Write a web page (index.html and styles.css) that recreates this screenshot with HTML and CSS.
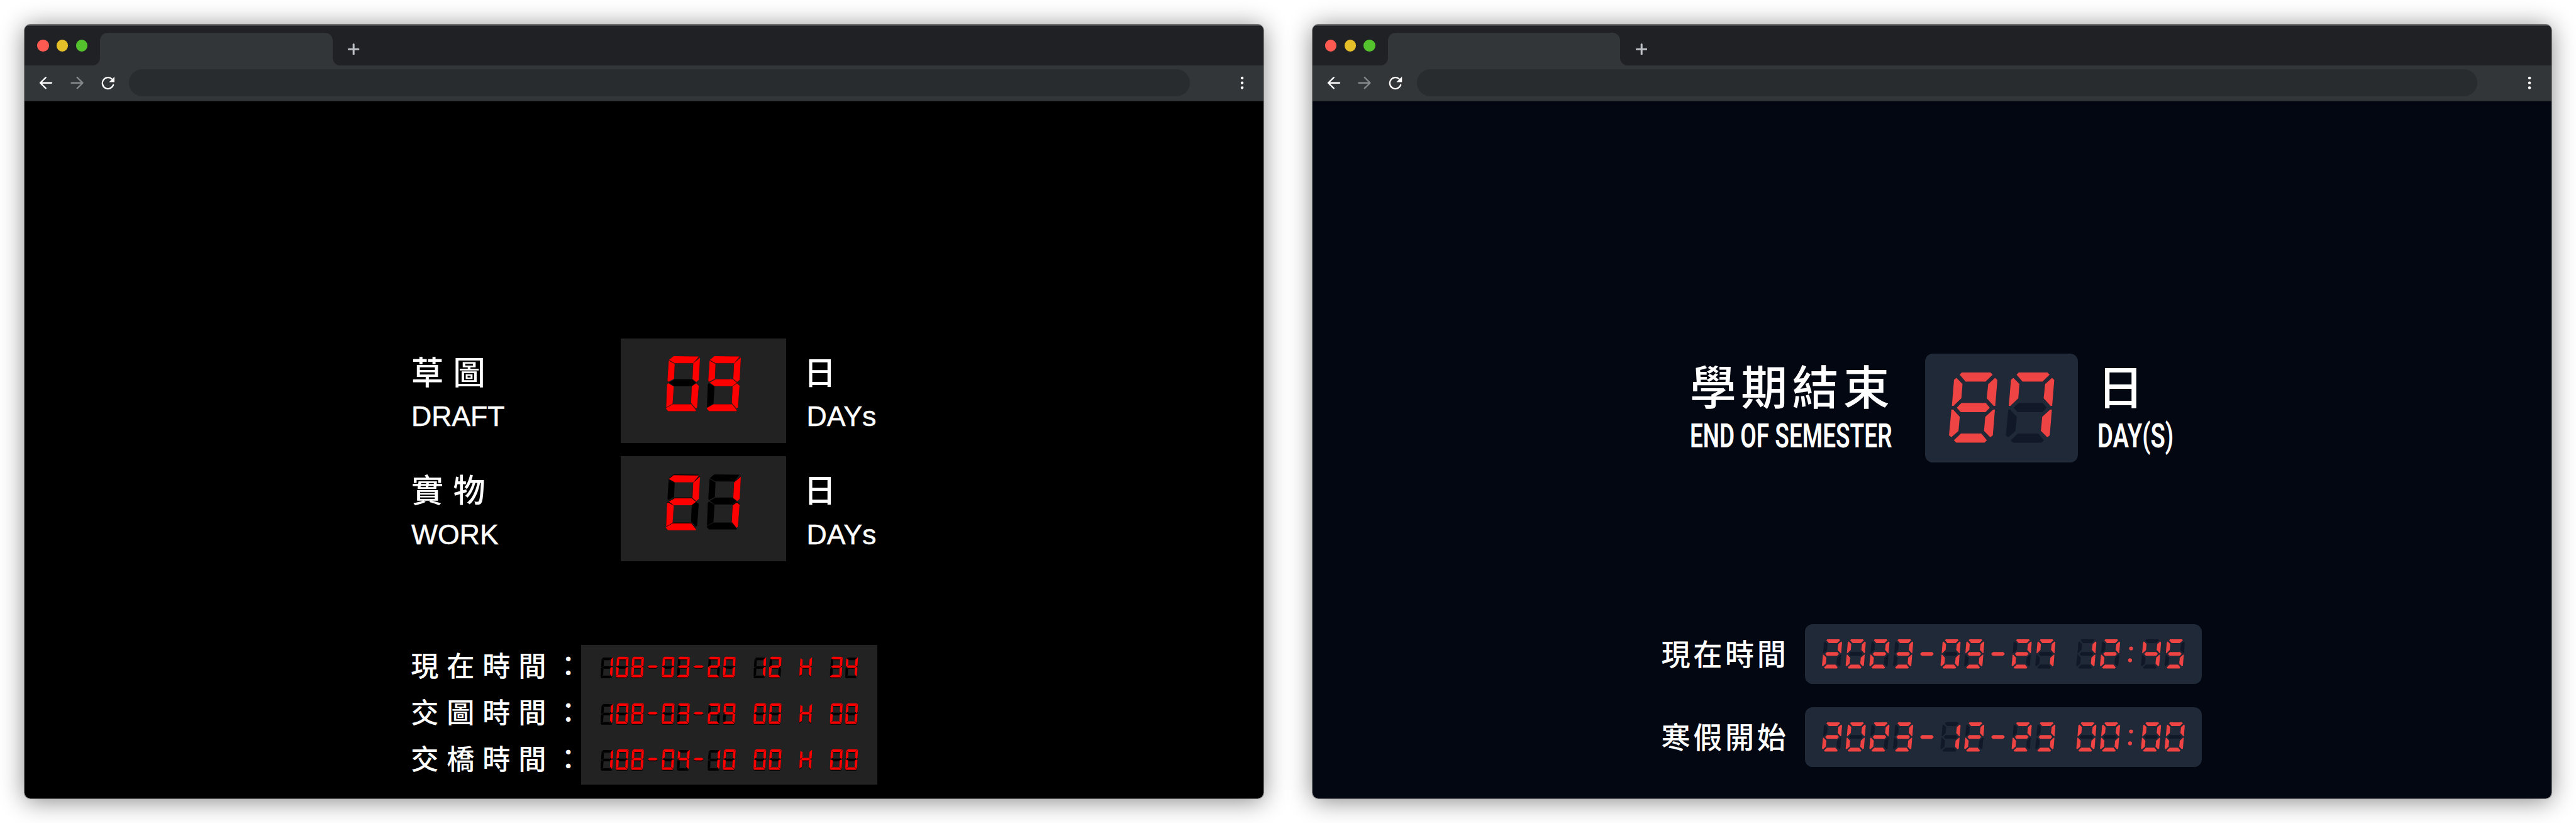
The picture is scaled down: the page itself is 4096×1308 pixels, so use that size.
FILE: index.html
```html
<!DOCTYPE html>
<html lang="zh-Hant">
<head>
<meta charset="utf-8">
<title>倒數計時</title>
<link rel="stylesheet" href="styles.css">
</head>
<body>
<main class="desk">

  <section class="window">
    <header class="chrome">
      <div class="tabstrip">
        <div class="lights"><i class="light close"></i><i class="light minimise"></i><i class="light zoom"></i></div>
        <div class="tab-slot"><div class="tab"></div></div>
        <div class="strip-rest">
          <svg class="plus" viewBox="0 0 24 24"><path d="M12 2v20M2 12h20"/></svg>
        </div>
      </div>
      <div class="toolbar">
        <svg class="icon back" viewBox="0 0 28 28"><path d="M26 14H3M14 2.8L2.6 14L14 25.2"/></svg>
        <svg class="icon forward" viewBox="0 0 28 28"><path d="M2 14h23M14 2.8L25.4 14L14 25.2"/></svg>
        <svg class="icon reload" viewBox="0 0 28 28"><path d="M22.2 6.2A11.6 11.6 0 1 0 25 18.2"/><path class="head" d="M27.6 1v11.2H16.2z"/></svg>
        <div class="address"></div>
        <svg class="menu" viewBox="0 0 8 28"><circle cx="4" cy="4" r="2.9"/><circle cx="4" cy="14" r="2.9"/><circle cx="4" cy="24" r="2.9"/></svg>
      </div>
    </header>
    <div class="page classic">
      <div class="counter">
        <div class="name"><p class="zh">草圖</p><p class="en">DRAFT</p></div>
        <div class="panel"><div class="readout" data-face="classic">09</div></div>
        <div class="unit"><p class="zh">日</p><p class="en">DAYs</p></div>
      </div>
      <div class="counter sunk">
        <div class="name"><p class="zh">實物</p><p class="en">WORK</p></div>
        <div class="panel"><div class="readout" data-face="classic">21</div></div>
        <div class="unit"><p class="zh">日</p><p class="en">DAYs</p></div>
      </div>
      <div class="schedule">
        <div class="labels"><p>現在時間：</p><p>交圖時間：</p><p>交橋時間：</p></div>
        <div class="times">
          <div class="readout" data-face="classic">108-03-20 12 H 34</div>
          <div class="readout" data-face="classic">108-03-29 00 H 00</div>
          <div class="readout" data-face="classic">108-04-10 00 H 00</div>
        </div>
      </div>
    </div>
  </section>

  <section class="window">
    <header class="chrome">
      <div class="tabstrip">
        <div class="lights"><i class="light close"></i><i class="light minimise"></i><i class="light zoom"></i></div>
        <div class="tab-slot"><div class="tab"></div></div>
        <div class="strip-rest">
          <svg class="plus" viewBox="0 0 24 24"><path d="M12 2v20M2 12h20"/></svg>
        </div>
      </div>
      <div class="toolbar">
        <svg class="icon back" viewBox="0 0 28 28"><path d="M26 14H3M14 2.8L2.6 14L14 25.2"/></svg>
        <svg class="icon forward" viewBox="0 0 28 28"><path d="M2 14h23M14 2.8L25.4 14L14 25.2"/></svg>
        <svg class="icon reload" viewBox="0 0 28 28"><path d="M22.2 6.2A11.6 11.6 0 1 0 25 18.2"/><path class="head" d="M27.6 1v11.2H16.2z"/></svg>
        <div class="address"></div>
        <svg class="menu" viewBox="0 0 8 28"><circle cx="4" cy="4" r="2.9"/><circle cx="4" cy="14" r="2.9"/><circle cx="4" cy="24" r="2.9"/></svg>
      </div>
    </header>
    <div class="page modern">
      <div class="counter">
        <div class="name"><p class="zh">學期結束</p><p class="en"><span>END OF SEMESTER</span></p></div>
        <div class="panel"><div class="readout" data-face="modern">87</div></div>
        <div class="unit"><p class="zh">日</p><p class="en"><span>DAY(S)</span></p></div>
      </div>
      <div class="moment">
        <p>現在時間</p>
        <div class="panel"><div class="readout" data-face="modern">2023-09-27 12:45</div></div>
      </div>
      <div class="moment">
        <p>寒假開始</p>
        <div class="panel"><div class="readout" data-face="modern">2023-12-23 00:00</div></div>
      </div>
    </div>
  </section>

</main>
<script src="readout.js"></script>
</body>
</html>
```
FILE: styles.css
```css
/* 1rem = 100 design pixels */
html { font-size: 76.935px; }

* { box-sizing: border-box; }

body {
  margin: 0;
  background: #fff;
  color: #fff;
  font-family: "Liberation Sans", "Noto Sans CJK TC", sans-serif;
  overflow: hidden;
}

p { margin: 0; white-space: nowrap; }

.desk {
  display: flex;
  gap: 1.01rem;
  height: 17rem;
  padding: .503rem .51rem .505rem;
}

.window {
  flex: 1 1 0;
  min-width: 0;
  display: flex;
  flex-direction: column;
  border-radius: .12rem;
  box-shadow: 0 0 0 1px rgba(0, 0, 0, .35), 0 .05rem .5rem rgba(0, 0, 0, .48);
}

/* browser chrome */
.chrome {
  border-radius: .12rem .12rem 0 0;
  background: #323639;
  border-bottom: 1px solid #28292b;
  height: 1.587rem;
  overflow: hidden;
}

.tabstrip {
  display: flex;
  height: .847rem;
  border-top: 2px solid #48494b;
}

.lights {
  display: flex;
  gap: .16rem;
  width: 1.56rem;
  padding: .293rem 0 0 .26rem;
  background: #202124;
  border-bottom-right-radius: .16rem;
}

.light { width: .24rem; height: .24rem; border-radius: 50%; }
.close { background: #ff5a52; }
.minimise { background: #e6c029; }
.zoom { background: #54c22d; }

.tab-slot {
  width: 4.8rem;
  padding-top: .145rem;
  background: linear-gradient(#202124 50%, #323639 50%);
}

.tab {
  height: 100%;
  background: #323639;
  border-radius: .16rem .16rem 0 0;
}

.strip-rest {
  flex: 1;
  padding: .365rem 0 0 .32rem;
  background: #202124;
  border-bottom-left-radius: .16rem;
}

.plus {
  display: block;
  width: .24rem;
  height: .24rem;
  fill: none;
  stroke: #bdc1c6;
  stroke-width: 4;
  stroke-linecap: round;
}

.toolbar {
  display: flex;
  align-items: center;
  height: .73rem;
  padding-left: .3rem;
}

.icon {
  width: .28rem;
  height: .28rem;
  margin-right: .36rem;
  fill: none;
  stroke: #fff;
  stroke-width: 3;
  stroke-linecap: round;
  stroke-linejoin: round;
}
.forward { stroke: #86888a; }
.reload { margin-right: .3rem; }
.reload .head { fill: #fff; stroke: none; }

.address {
  width: 21.92rem;
  height: .56rem;
  border-radius: .28rem;
  background: #282c2f;
}

.menu { width: .08rem; height: .28rem; margin-left: 1.04rem; fill: #fff; }

/* pages */
.page {
  flex: 1;
  border-radius: 0 0 .12rem .12rem;
}

.counter { display: flex; }
.readout svg { display: block; overflow: visible; }
.zh, .labels, .moment p { font-family: "Noto Sans CJK TC", sans-serif; }

/* first page */
.classic {
  --on: #f00;
  --off: #000;
  background: #000;
  padding: 4.9rem 0 0 7.99rem;
}

.classic .counter { height: 2.16rem; margin-bottom: .28rem; }
.classic .name { width: 4.33rem; padding-top: .205rem; }
.classic .unit { padding: .205rem 0 0 .42rem; }
.classic .zh { font-size: .665rem; line-height: .92rem; letter-spacing: .2rem; font-weight: 500; }
.classic .unit .zh { margin-left: -.06rem; }
.classic .en { font-size: .58rem; line-height: .92rem; margin-top: .035rem; -webkit-text-stroke: .5px #fff; }
.classic .counter .panel { width: 3.42rem; padding: .37rem 0 0 .93rem; background: #222; }
.classic .counter svg { height: 1.137rem; }
.classic .sunk { --shift: 5px; }

.schedule { display: flex; margin-top: 1.74rem; --shift: -13px; }
.labels { width: 3.51rem; font-size: .575rem; font-weight: 500; letter-spacing: .167rem; }
.labels p { line-height: .96rem; position: relative; top: -.07rem; left: -.01rem; }
.times { width: 6.12rem; background: #222; padding-left: .4rem; }
.times .readout { height: .96rem; padding-top: .25rem; }
.times svg { height: .426rem; }

/* second page */
.modern {
  --on: #ef4444;
  --off: #111827;
  background: #030712;
  padding: 5.22rem 0 0 7.2rem;
}

.modern .panel { background: #1f2937; border-radius: .16rem; }

.modern .counter { height: 2.24rem; padding-left: .6rem; margin-bottom: 3.34rem; }
.modern .name { width: 4.86rem; padding-top: .03rem; }
.modern .unit { padding: .03rem 0 0 .4rem; }
.modern .zh { font-size: .96rem; line-height: 1.2rem; letter-spacing: .096rem; font-weight: 500; }
.modern .en { font: 600 .7rem/1rem Roboto, sans-serif; margin-top: -.02rem; }
.modern .en span { display: inline-block; transform: scaleX(.687); transform-origin: 0 50%; }
.modern .unit .en span { transform: scaleX(.71); }
.modern .counter .panel { width: 3.16rem; padding: .39rem 0 0 .49rem; }
.modern .counter svg { height: 1.45rem; }

.moment { display: flex; height: 1.24rem; margin-bottom: .48rem; }
.moment p { width: 2.98rem; padding-left: .01rem; font-size: .6rem; line-height: 1.17rem; letter-spacing: .06rem; font-weight: 500; }
.moment .panel { width: 8.2rem; padding: .31rem 0 0 .35rem; }
.moment svg { height: .604rem; }

/* lamps */
.unlit { fill: var(--off); }
.lit { fill: var(--on); transform: translateY(var(--shift, 0)); }
```
FILE: readout.js
```js
// Turns the text of each .readout into a row of seven-segment cells.
const FACES = {
  classic: {
    height: 341, advance: 253, gap: 253,
    segments: {
      a: '47,0 204,2 169,44 54,44 18,23',
      b: '211,9 204,146 188,161 164,141 169,45',
      c: '187,169 203,183 193,317 185,326 155,290 160,187',
      d: '42,298 157,298 186,335 184,341 13,341 0,326 1,321',
      e: '13,168 48,188 41,295 1,318 6,175',
      f: '17,27 54,49 50,140 15,159 9,152',
      g: '18,164 54,143 160,143 186,165 158,186 48,186'
    }
  },
  modern: {
    height: 435, advance: 353, gap: 257,
    segments: {
      a: '79,0 258,0 271,14 227,57 103,57 66,14',
      b: '286,33 300,47 287,207 277,207 234,160 243,72',
      c: '274,230 285,230 272,390 256,402 217,362 225,275',
      d: '74,378 201,378 235,420 221,435 45,435 30,420',
      e: '15,230 26,230 67,275 59,363 14,402 0,389',
      f: '46,33 84,71 77,160 28,207 18,207 31,46',
      g: '77,189 229,189 253,218 227,246 73,246 48,218'
    }
  }
};

const LAMPS = {
  0: 'abcdef', 1: 'bc', 2: 'abged', 3: 'abgcd', 4: 'fgbc',
  5: 'afgcd', 6: 'afgedc', 7: 'fabc', 8: 'abcdefg', 9: 'abcdfg',
  '-': 'g', H: 'bcefg'
};

for (const el of document.querySelectorAll('.readout')) {
  const name = el.dataset.face;
  const face = FACES[name];
  const text = el.textContent.trim();
  let x = 0, unlit = '', lit = '';
  const draw = lamps => [...lamps]
    .map(s => `<polygon points="${face.segments[s]}" transform="translate(${x} 0)"/>`).join('');

  for (const ch of text) {
    if (ch === ':') {
      lit += `<circle cx="${x + 110}" cy="136" r="29"/><circle cx="${x + 95}" cy="313" r="29"/>`;
    } else if (ch !== ' ') {
      // every digit has seven lamps behind it; on the classic face signs have theirs too
      if (/\d/.test(ch)) unlit += draw('abcdefg');
      else if (name === 'classic') unlit += draw(LAMPS[ch]);
      lit += draw(LAMPS[ch]);
    }
    x += ch === ' ' || ch === ':' ? face.gap : face.advance;
  }

  el.setAttribute('role', 'img');
  el.setAttribute('aria-label', text);
  el.innerHTML = `<svg viewBox="0 0 ${x} ${face.height}"><g class="unlit">${unlit}</g><g class="lit">${lit}</g></svg>`;
}
```
